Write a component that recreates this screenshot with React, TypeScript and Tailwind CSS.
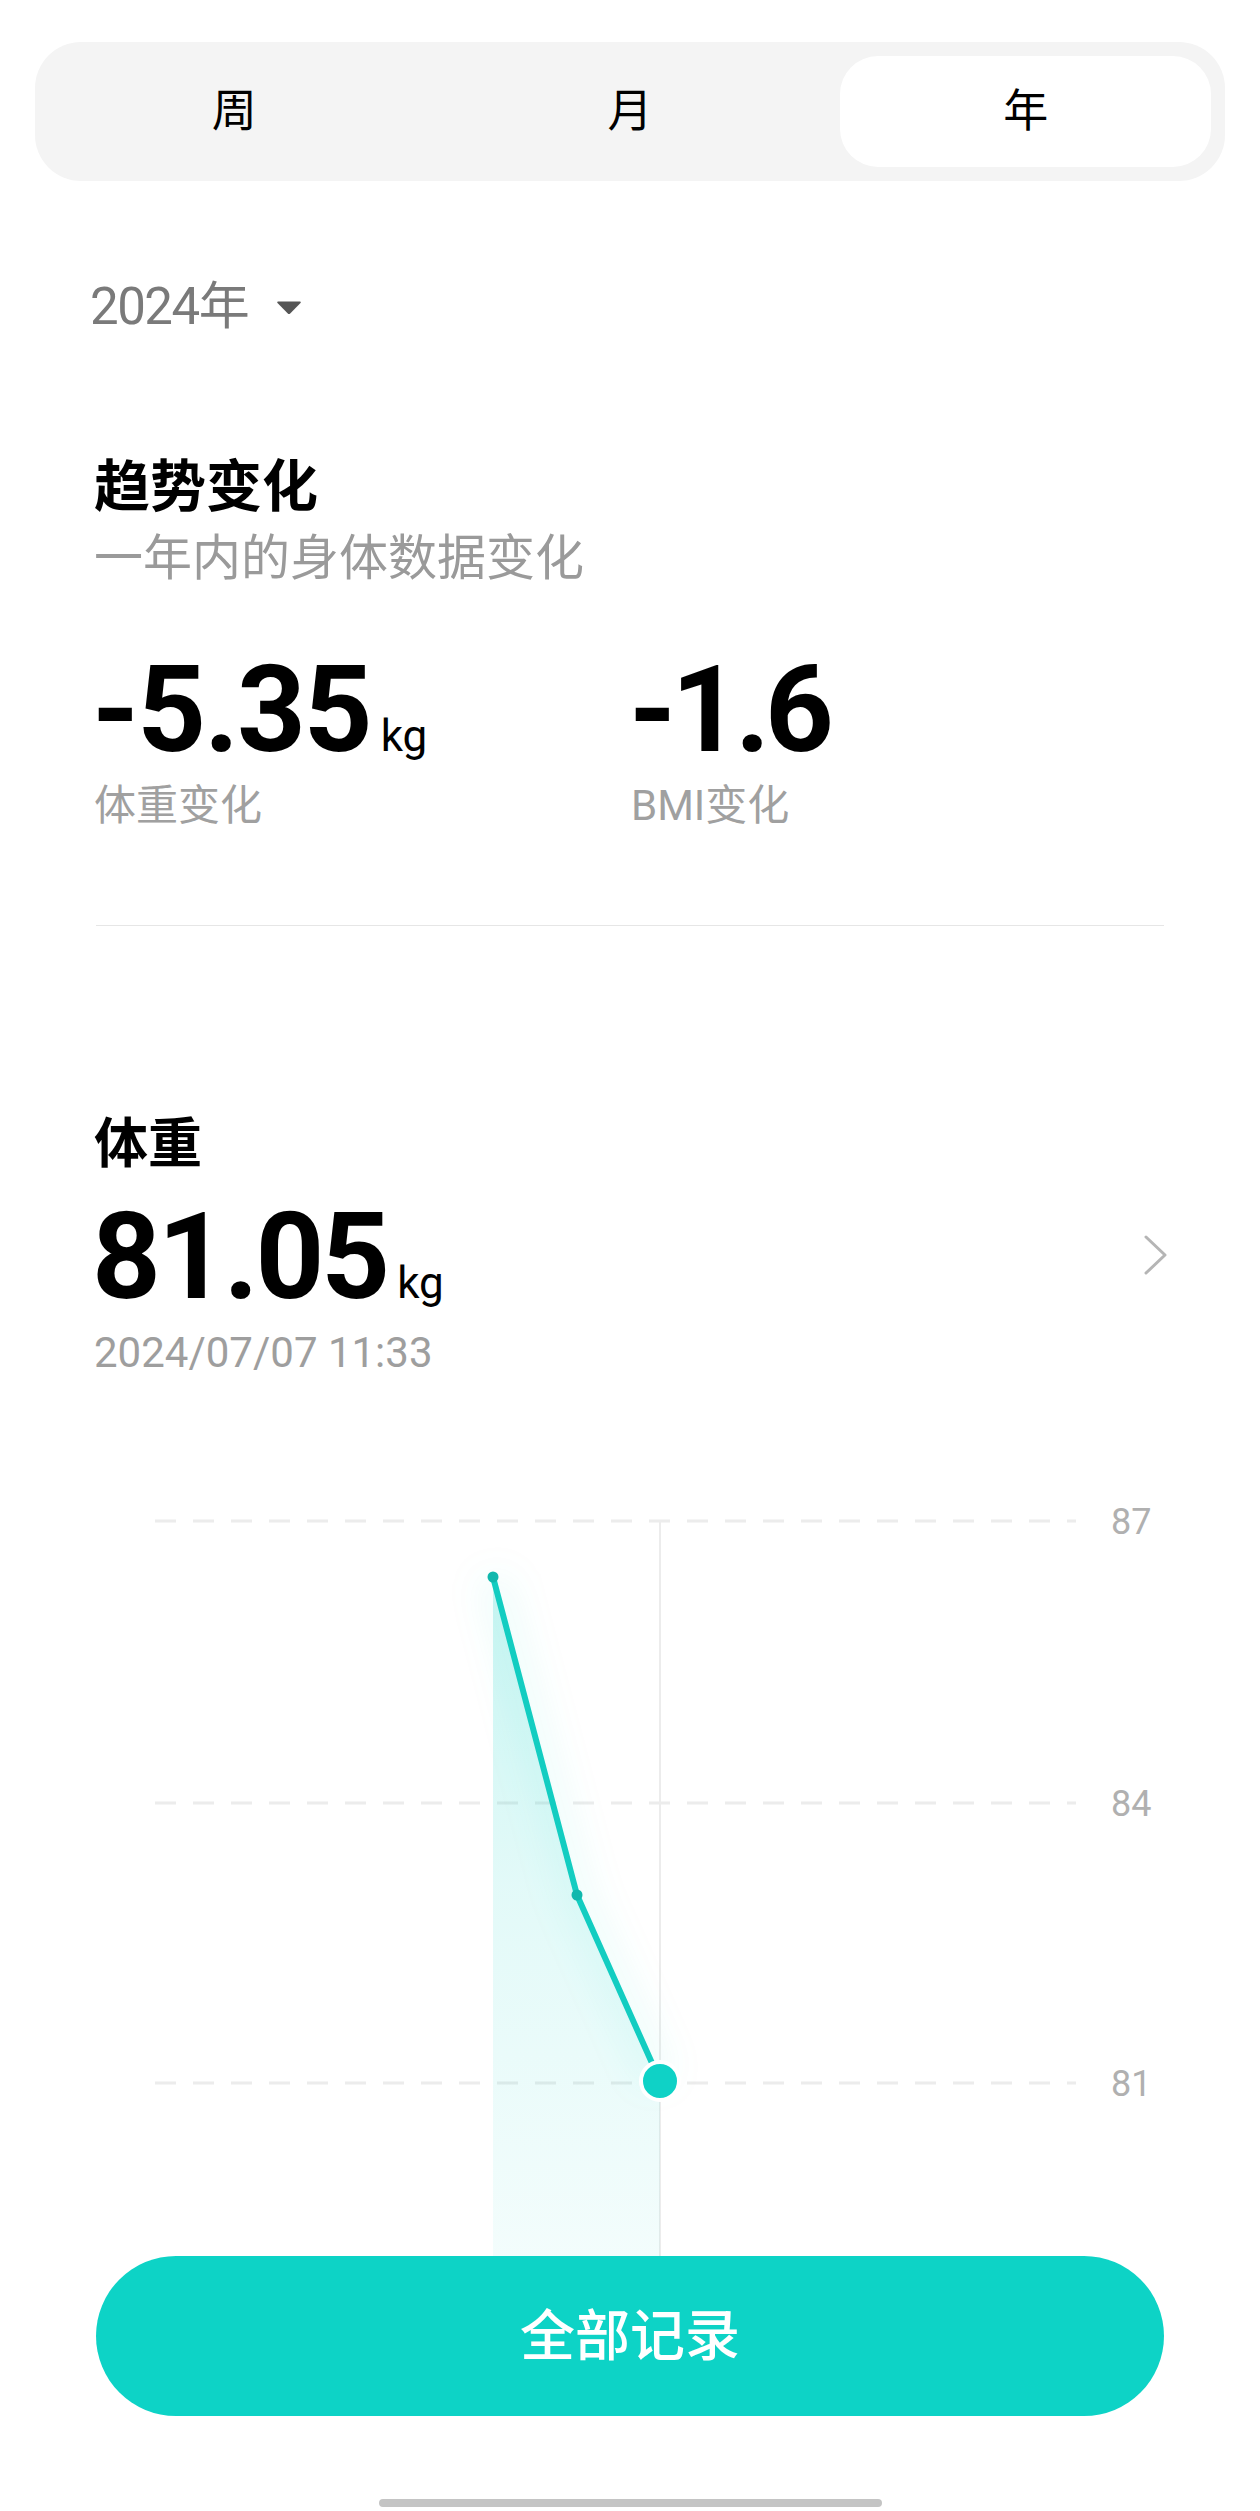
const tabs = [
  { label: '周', active: false },
  { label: '月', active: false },
  { label: '年', active: true },
]

const gridLines = [
  { y: 147, label: '87' },
  { y: 429, label: '84' },
  { y: 709, label: '81' },
]

// chart points, svg coords
const pts = [
  { x: 493, y: 203 },
  { x: 577, y: 521 },
  { x: 660, y: 707 },
]

function WeightChart() {
  const line = pts.map((p) => `${p.x},${p.y}`).join(' ')
  const area = `${line} 660,882 493,882`
  return (
    <svg width="1260" height="882" viewBox="0 0 1260 882" className="block shrink-0">
      <defs>
        <linearGradient id="fillGrad" x1="0" y1="0" x2="0" y2="1">
          <stop offset="0%" stopColor="#0fd2c6" stopOpacity="0.22" />
          <stop offset="45%" stopColor="#0fd2c6" stopOpacity="0.12" />
          <stop offset="100%" stopColor="#0fd2c6" stopOpacity="0.05" />
        </linearGradient>
        <filter id="glow" x="-50%" y="-20%" width="200%" height="140%">
          <feGaussianBlur stdDeviation="18" />
        </filter>
      </defs>

      {gridLines.map((g) => (
        <g key={g.label}>
          <line x1="155" y1={g.y} x2="1076" y2={g.y} stroke="#ececec" strokeWidth="3" strokeDasharray="21 17" />
          <text x="1111" y={g.y + 13} fontSize="36" fill="#b0b0b0" fontFamily="Roboto, sans-serif">
            {g.label}
          </text>
        </g>
      ))}

      <line x1="660" y1="147" x2="660" y2="882" stroke="#ececec" strokeWidth="2" />

      <polygon points={area} fill="url(#fillGrad)" />
      <polyline points={line} fill="none" stroke="#0fd2c6" strokeOpacity="0.07" strokeWidth="30" filter="url(#glow)" />
      <polyline points={line} fill="none" stroke="#13cdc1" strokeWidth="6" strokeLinejoin="round" strokeLinecap="round" />

      <circle cx={pts[0].x} cy={pts[0].y} r="5.5" fill="#11b8ad" />
      <circle cx={pts[1].x} cy={pts[1].y} r="5.5" fill="#11b8ad" />
      <circle cx={pts[2].x} cy={pts[2].y} r="19" fill="#0fd2c6" stroke="#ffffff" strokeWidth="4" />
    </svg>
  )
}

export default function App() {
  return (
    <div className="w-[1260px] h-[2511px] bg-white flex flex-col overflow-hidden text-black font-['Roboto','Noto_Sans_CJK_SC',sans-serif]">
      {/* period tabs */}
      <div className="mt-[42px] mx-[35px] h-[139px] shrink-0 rounded-[46px] bg-[#f4f4f4] p-[14px] flex gap-[25px]">
        {tabs.map((t) => (
          <div
            key={t.label}
            className={`flex-1 flex items-center justify-center rounded-[38px] text-[45px] leading-none ${
              t.active ? 'bg-white' : ''
            }`}
          >
            {t.label}
          </div>
        ))}
      </div>

      {/* year picker */}
      <div className="mt-[97px] h-[56px] shrink-0 pl-[90px] flex items-center text-[51px] leading-none text-[#7a7a7a]">
        <span className="tracking-[-1.5px]">2024年</span>
        <svg width="26" height="15" viewBox="0 0 26 15" className="ml-[28px] mt-[2px]">
          <path d="M2 1.5 H24 Q25.5 1.5 24.5 3 L14.2 13.5 Q13 14.6 11.8 13.5 L1.5 3 Q0.5 1.5 2 1.5 Z" fill="#555555" />
        </svg>
      </div>

      {/* trend */}
      <div className="mt-[125px] pl-[94px] text-[56px] leading-none font-semibold shrink-0">趋势变化</div>
      <div className="mt-[19px] pl-[94px] text-[49px] leading-none text-[#9a9a9a] shrink-0">一年内的身体数据变化</div>

      <div className="mt-[67px] flex shrink-0">
        <div className="w-[629px] pl-[92px]">
          <div className="flex items-baseline">
            <span className="text-[120px] leading-none font-bold tracking-[-2px]">-5.35</span>
            <span className="ml-[10px] text-[44px] leading-none">kg</span>
          </div>
          <div className="mt-[15px] pl-[2px] text-[42px] leading-none text-[#a0a0a0]">体重变化</div>
        </div>
        <div>
          <div className="flex items-baseline">
            <span className="text-[120px] leading-none font-bold tracking-[-5px]">-1.6</span>
          </div>
          <div className="mt-[15px] pl-[2px] text-[42px] leading-none text-[#a0a0a0]">BMI变化</div>
        </div>
      </div>

      <div className="mt-[98px] mx-[96px] h-px bg-[#e6e6e6] shrink-0" />

      {/* weight */}
      <div className="mt-[192px] pl-[94px] text-[54px] leading-none font-semibold shrink-0">体重</div>
      <div className="mt-[25px] pl-[92px] pr-[91px] flex items-center justify-between shrink-0">
        <div className="flex items-baseline">
          <span className="text-[120px] leading-none font-bold tracking-[-3px]">81.05</span>
          <span className="ml-[10px] text-[44px] leading-none">kg</span>
        </div>
        <svg width="26" height="42" viewBox="0 0 26 42" className="-mt-[4px]">
          <polyline points="3,3 22,21 3,39" fill="none" stroke="#b5b5b5" strokeWidth="3" strokeLinecap="round" strokeLinejoin="round" />
        </svg>
      </div>
      <div className="mt-[15px] pl-[94px] text-[42px] leading-none text-[#9e9e9e] shrink-0">2024/07/07 11:33</div>

      <WeightChart />

      <button className="mx-[96px] h-[160px] shrink-0 rounded-full bg-[#0dd3c6] text-white text-[55px] font-medium leading-none">
        全部记录
      </button>

      <div className="mt-[83px] mx-auto w-[503px] h-[8px] rounded-full bg-[#c4c4c4] shrink-0" />
    </div>
  )
}
